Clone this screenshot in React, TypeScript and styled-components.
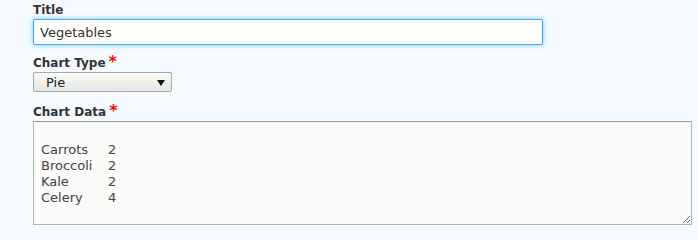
import React, { useState } from 'react';
import styled, { createGlobalStyle } from 'styled-components';

const GlobalStyle = createGlobalStyle`
  html, body {
    margin: 0;
    padding: 0;
    background: #f5fafe;
  }
`;

const Form = styled.form`
  padding: 0 6px 0 33px;
  font-family: 'DejaVu Sans', 'Liberation Sans', sans-serif;
  color: #333;
`;

const Field = styled.div<{ $gap: number }>`
  margin-bottom: ${(p) => p.$gap}px;
`;

const Label = styled.label`
  display: block;
  font-size: 12px;
  font-weight: bold;
  line-height: 18px;
  color: #333;
  padding-top: 1px;
`;

const Required = styled.span`
  color: #e3110a;
  font-size: 16px;
  margin-left: 3px;
  line-height: 10px;
`;

const TextInput = styled.input`
  display: block;
  box-sizing: border-box;
  width: 510px;
  height: 26px;
  padding: 0 6px;
  font-family: inherit;
  font-size: 13px;
  color: #333;
  background: #fff;
  border: 1px solid #3fa9f5;
  border-radius: 2px;
  box-shadow: 0 0 5px rgba(64, 170, 250, 0.65);
  outline: none;
`;

const SelectWrap = styled.div`
  position: relative;
  width: 139px;

  &::after {
    content: '';
    position: absolute;
    right: 7px;
    top: 8px;
    border-left: 4px solid transparent;
    border-right: 4px solid transparent;
    border-top: 6px solid #111;
    pointer-events: none;
  }
`;

const Select = styled.select`
  display: block;
  appearance: none;
  box-sizing: border-box;
  width: 100%;
  height: 20px;
  padding: 0 0 0 12px;
  font-family: inherit;
  font-size: 13px;
  color: #222;
  background: linear-gradient(#fafaf8, #e6e6e2);
  border: 1px solid #a9a9a9;
  border-radius: 2px;
  outline: none;
`;

const DataArea = styled.textarea`
  display: block;
  box-sizing: border-box;
  width: 100%;
  height: 104px;
  padding: 4px 7px;
  font-family: inherit;
  font-size: 13px;
  line-height: 16px;
  color: #444;
  tab-size: 67px;
  background: #fafaf9;
  border: 1px solid #b3b3b3;
  border-top-color: #999;
  border-radius: 1px;
  outline: none;
`;

const App: React.FC = () => {
  const [title, setTitle] = useState('Vegetables');
  const [type, setType] = useState('pie');
  const [data, setData] = useState(
    '\nCarrots\t2\nBroccoli\t2\nKale\t2\nCelery\t4'
  );

  return (
    <>
      <GlobalStyle />
      <Form>
        <Field $gap={8}>
          <Label htmlFor="chart-title">Title</Label>
          <TextInput
            id="chart-title"
            type="text"
            value={title}
            onChange={(e) => setTitle(e.target.value)}
          />
        </Field>
        <Field $gap={10}>
          <Label htmlFor="chart-type">
            Chart Type<Required>*</Required>
          </Label>
          <SelectWrap>
            <Select
              id="chart-type"
              value={type}
              onChange={(e) => setType(e.target.value)}
            >
              <option value="pie">Pie</option>
              <option value="bar">Bar</option>
              <option value="line">Line</option>
            </Select>
          </SelectWrap>
        </Field>
        <Field $gap={0}>
          <Label htmlFor="chart-data">
            Chart Data<Required>*</Required>
          </Label>
          <DataArea
            id="chart-data"
            value={data}
            onChange={(e) => setData(e.target.value)}
          />
        </Field>
      </Form>
    </>
  );
};

export default App;
